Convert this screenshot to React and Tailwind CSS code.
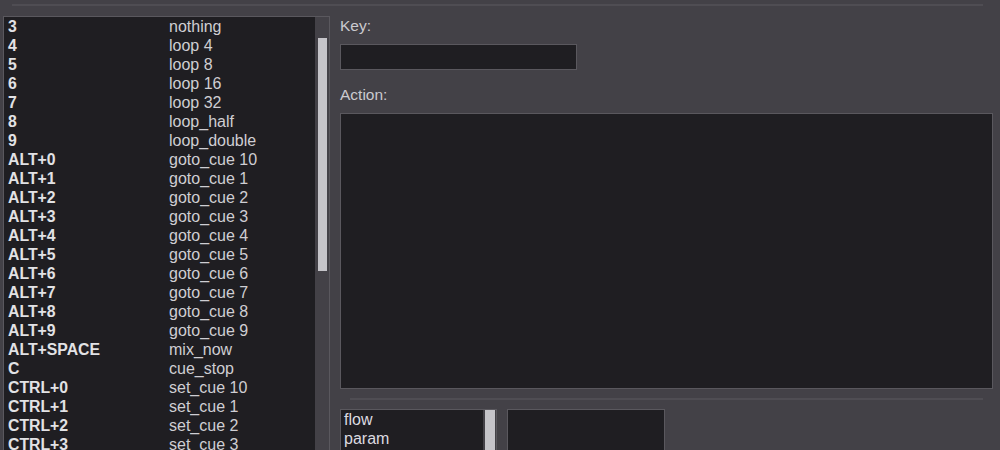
import React from "react";

const rows = [
  ["3", "nothing"],
  ["4", "loop 4"],
  ["5", "loop 8"],
  ["6", "loop 16"],
  ["7", "loop 32"],
  ["8", "loop_half"],
  ["9", "loop_double"],
  ["ALT+0", "goto_cue 10"],
  ["ALT+1", "goto_cue 1"],
  ["ALT+2", "goto_cue 2"],
  ["ALT+3", "goto_cue 3"],
  ["ALT+4", "goto_cue 4"],
  ["ALT+5", "goto_cue 5"],
  ["ALT+6", "goto_cue 6"],
  ["ALT+7", "goto_cue 7"],
  ["ALT+8", "goto_cue 8"],
  ["ALT+9", "goto_cue 9"],
  ["ALT+SPACE", "mix_now"],
  ["C", "cue_stop"],
  ["CTRL+0", "set_cue 10"],
  ["CTRL+1", "set_cue 1"],
  ["CTRL+2", "set_cue 2"],
  ["CTRL+3", "set_cue 3"],
];

export default function App() {
  return (
    <div
      className="w-[1000px] h-[450px] overflow-hidden bg-[#434147] flex flex-col"
      style={{ fontFamily: '"Liberation Sans", Arial, sans-serif' }}
    >
      <div className="mt-[4px] ml-[12px] w-[971px] h-[2px] bg-[#4f4d53] shrink-0" />
      <div className="flex mt-[10px] pr-[7px]">
        {/* Left list */}
        <div className="ml-[3px] w-[327px] h-[460px] border border-[#5a585e] bg-[#1f1e22] flex shrink-0">
          <div className="flex-1 flex flex-col pl-[4px]">
            {rows.map(([k, v]) => (
              <div key={k} className="flex h-[19px] items-center leading-[19px]">
                <div className="w-[161px] font-bold text-[15.8px] text-[#e2e2e5]">{k}</div>
                <div className="text-[16px] text-[#cfced3]">{v}</div>
              </div>
            ))}
          </div>
          <div className="w-[14px] bg-[#434147] flex flex-col pl-[3px] pr-[2px] pt-[21px]">
            <div className="w-[9px] h-[233px] bg-[#c5c4c9]" />
          </div>
        </div>

        {/* Right side */}
        <div className="ml-[10px] flex-1 flex flex-col">
          <div className="h-[19px] leading-[19px] text-[15.5px] text-[#cbcacf]">Key:</div>
          <div className="mt-[9px] w-[237px] h-[26px] border border-[#5a585e] bg-[#1f1e22]" />
          <div className="mt-[15px] h-[19px] leading-[19px] text-[15.5px] text-[#cbcacf]">Action:</div>
          <div className="mt-[9px] w-[653px] h-[276px] border border-[#5a585e] bg-[#1f1e22]" />
          <div className="mt-[9px] ml-[10px] w-[633px] h-[2px] bg-[#4f4d53]" />
          <div className="mt-[9px] flex gap-[10px]">
            <div className="w-[157px] h-[60px] border border-[#5a585e] bg-[#1f1e22] flex">
              <div className="flex-1 flex flex-col pl-[3px]">
                <div className="h-[19px] leading-[19px] text-[16px] text-[#dcdbe0]">flow</div>
                <div className="h-[19px] leading-[19px] text-[16px] text-[#dcdbe0]">param</div>
              </div>
              <div className="w-[13px] bg-[#434147] pl-[2px] pr-[1px]">
                <div className="w-[10px] h-full bg-[#c5c4c9]" />
              </div>
            </div>
            <div className="w-[158px] h-[60px] border border-[#5a585e] bg-[#1f1e22]" />
          </div>
        </div>
      </div>
    </div>
  );
}
